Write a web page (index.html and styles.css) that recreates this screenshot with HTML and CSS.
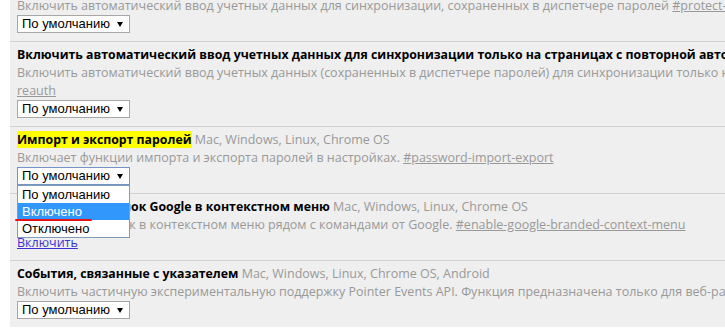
FILE: index.html
```html
<!DOCTYPE html>
<html lang="ru">
<head>
    <meta charset="UTF-8">
    <meta name="viewport" content="width=device-width, initial-scale=1.0">
    <title>Экспериментальные функции</title>
    <link rel="stylesheet" href="styles.css">
</head>
<body>
    <div class="flags">
        <div class="flag flag-first">
            <div class="desc">Включить автоматический ввод учетных данных для синхронизации, сохраненных в диспетчере паролей <a href="#" class="ref">#protect-sync-credential</a></div>
            <div class="select">По умолчанию <span class="arrow"></span></div>
        </div>

        <div class="flag">
            <div class="title">Включить автоматический ввод учетных данных для синхронизации только на страницах с повторной авторизацией <span class="platforms">Mac, Windows, Linux, Chrome OS</span></div>
            <div class="desc">Включить автоматический ввод учетных данных (сохраненных в диспетчере паролей) для синхронизации только на страницах с повторной авторизацией. <a href="#" class="ref">#protect-sync-credential-on-<br>reauth</a></div>
            <div class="select">По умолчанию <span class="arrow"></span></div>
        </div>

        <div class="flag">
            <div class="title"><span class="mark">Импорт и экспорт паролей</span> <span class="platforms">Mac, Windows, Linux, Chrome OS</span></div>
            <div class="desc">Включает функции импорта и экспорта паролей в настройках. <a href="#" class="ref">#password-import-export</a></div>
            <div class="select-wrap">
                <div class="select focused">По умолчанию <span class="arrow"></span></div>
                <ul class="options">
                    <li>По умолчанию</li>
                    <li class="active">Включено</li>
                    <li>Отключено</li>
                </ul>
                <div class="pen-line"></div>
            </div>
        </div>

        <div class="flag">
            <div class="title">Фирменный значок Google в контекстном меню <span class="platforms">Mac, Windows, Linux, Chrome OS</span></div>
            <div class="desc">Показывать значок в контекстном меню рядом с командами от Google. <a href="#" class="ref">#enable-google-branded-context-menu</a></div>
            <a href="#" class="enable">Включить</a>
        </div>

        <div class="flag">
            <div class="title">События, связанные с указателем <span class="platforms">Mac, Windows, Linux, Chrome OS, Android</span></div>
            <div class="desc">Включить частичную экспериментальную поддержку Pointer Events API. Функция предназначена только для веб-разработчиков. <a href="#" class="ref">#enable-pointer-events</a></div>
            <div class="select">По умолчанию <span class="arrow"></span></div>
        </div>
    </div>
</body>
</html>
```

FILE: styles.css
```css
body {
    margin: 0;
    background-color: #fff;
    overflow: hidden;
    font-family: 'Open Sans', sans-serif;
    font-size: 12.5px;
    color: #000;
}
.flags {
    margin-left: 10px;
    margin-top: -3px;
    background-color: #efefef;
}
.flag {
    border-top: 1px solid #d2d2d2;
    padding: 4px 0 8px 7px;
    line-height: 18px;
    white-space: nowrap;
}
.flag-first {
    border-top: none;
    padding-top: 0;
}
.title {
    font-weight: bold;
    font-size: 12.3px;
}
.mark {
    background-color: #ffff00;
}
.platforms {
    font-weight: normal;
    font-size: 12.5px;
    color: #999;
}
.desc {
    color: #999;
}
.ref {
    color: #999;
}
.enable {
    color: #3b32d6;
    display: block;
}
.select {
    position: relative;
    box-sizing: border-box;
    width: 113px;
    height: 18px;
    border: 1px solid #a7a7a7;
    background-color: #fff;
    font-family: 'Liberation Sans', Arial, sans-serif;
    font-size: 13px;
    line-height: 16px;
    padding-left: 4px;
}
.select.focused {
    border-color: #7394c4;
}
.arrow {
    position: absolute;
    right: 6px;
    top: 6px;
    border-left: 3px solid transparent;
    border-right: 3px solid transparent;
    border-top: 5px solid #000;
}
.select-wrap {
    position: relative;
    width: 113px;
}
.options {
    position: absolute;
    top: 18px;
    left: 0;
    width: 113px;
    box-sizing: border-box;
    margin: 0;
    padding: 0;
    list-style: none;
    background-color: #fff;
    border: 1px solid #7f9db9;
    font-family: 'Liberation Sans', Arial, sans-serif;
    font-size: 13px;
    z-index: 2;
}
.options li {
    height: 17px;
    line-height: 17px;
    padding-left: 4px;
}
.options .active {
    background-color: #3297fd;
    color: #fff;
}
.pen-line {
    position: absolute;
    left: -2px;
    top: 52px;
    width: 77px;
    height: 2px;
    border-radius: 1px;
    background-color: #e8121b;
    z-index: 3;
}
```
